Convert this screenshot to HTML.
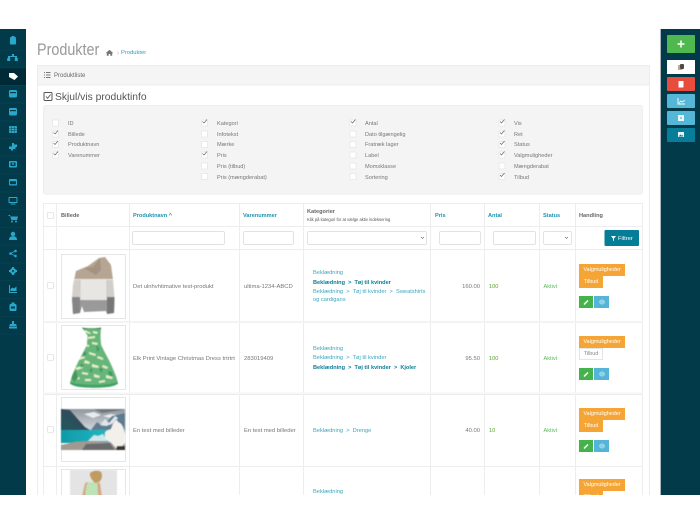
<!DOCTYPE html>
<html lang="da">
<head>
<meta charset="utf-8">
<title>Produkter</title>
<style>
html,body{margin:0;padding:0;width:700px;height:525px;overflow:hidden;background:#fff}
#r{position:absolute;left:0;top:0;width:700px;height:525px;overflow:hidden;font-family:"Liberation Sans",sans-serif;font-size:5.6px;color:#777;filter:blur(.3px)}
.t{position:absolute;height:8px;line-height:8px;white-space:nowrap}
.c{font-size:5.85px}
.l{color:#3ba7c0;font-size:5.7px}
.a{color:#0a7d96;font-weight:bold}
.h{color:#1c93ae;font-weight:bold}
.d{color:#666;font-weight:bold}
.in{position:absolute;background:#fff;border:1px solid #e2e2e2;border-radius:2px;box-sizing:border-box;height:14px}
.badge{position:absolute;box-sizing:border-box;height:12px;line-height:12px;text-align:center;background:#f4a536;color:#fff;font-size:5.4px}
.off{background:#fff;border:1px solid #e5e5e5;color:#888;line-height:10px}
#bottom{position:absolute;left:0;top:495px;width:700px;height:30px;background:#fff}
</style>
</head>
<body>
<div id="r">
<svg width="700" height="525" viewBox="0 0 700 525" style="position:absolute;left:0;top:0">
<defs>
<linearGradient id="sky" x1="0" y1="0" x2="0" y2="1"><stop offset="0" stop-color="#8f979e"/><stop offset="1" stop-color="#dbe2e6"/></linearGradient>
<linearGradient id="wat" x1="0" y1="0" x2="1" y2="0"><stop offset="0" stop-color="#0f9aa6"/><stop offset=".7" stop-color="#1fb6c2"/><stop offset="1" stop-color="#2cb6c0"/></linearGradient>
<filter id="soft" x="-5%" y="-5%" width="110%" height="110%"><feGaussianBlur stdDeviation=".55"/></filter>
<clipPath id="sw"><path d="M76 271L88 266 99 258 105 257 111 265 113 280 114.500 298 114 313 107 314 106 311 84 312 82 306 80 313 73 314 72 298 73 285z"/></clipPath>
<clipPath id="dr"><path d="M82 327.500c3 1.200 16 1.200 19 0l-.5 8c0 4 .5 6 .5 9 3 7 8 15 11 22 2 5 5 11 6 17-6 6-42 6-48 0 1-6 4-12 6-17 3-7 8-15 11-22 0-3 .5-5 .5-9z"/></clipPath>
<clipPath id="lk"><rect x="61" y="409" width="64" height="41"/></clipPath>
</defs>

<!-- sidebars -->
<rect x="0" y="29" width="26" height="466" fill="#023a4a"/>
<rect x="0" y="68" width="26" height="17" fill="#002a37"/>
<g stroke="#0a4656" stroke-width=".6">
<path d="M0 50.500H26M0 68H26M0 85.500H26M0 103H26M0 121H26M0 138.500H26M0 156H26M0 174H26M0 192H26M0 209.500H26M0 227.500H26M0 245H26M0 263H26M0 280.500H26M0 298.500H26M0 316.500H26M0 334H26"/>
</g>
<rect x="660" y="29" width="40" height="466" fill="#023a4a"/>
<rect x="660" y="29" width="1" height="466" fill="#a9b6ba"/>

<!-- left icons -->
<g fill="#2aa8ca">
<rect x="10" y="37" width="6" height="7.500" rx="1"/><rect x="11.500" y="36" width="3" height="2" rx=".5"/>
<path d="M12 54h2v2h3v2h.8v3h-3v-3h.2v-1H10v1h.2v3h-3v-3H8v-2h4z"/>
<path d="M9 73h5l4 3.500-3.500 3.500-5.500-3z" fill="#fff"/>
<rect x="9" y="90" width="8" height="7.500" rx="1.500"/><rect x="10" y="92" width="6" height="1.200" fill="#023a4a"/>
<rect x="9" y="108" width="8" height="7.500" rx="1.500"/><rect x="10" y="110" width="6" height="1.200" fill="#023a4a"/>
<rect x="9" y="126" width="8" height="7" rx="1"/><path d="M9 128.500h8M9 130.500h8M11.500 126v7M14.500 126v7" stroke="#023a4a" stroke-width=".4"/>
<path d="M12 143h2v1.500h3v2.500h-1.500v2H13v1.500h-2V149H9v-2.500h3z"/>
<rect x="9" y="161" width="8" height="6.500" rx="1"/><rect x="10.500" y="162.500" width="5" height="3.500" fill="#023a4a"/><circle cx="13" cy="164" r="1"/>
<rect x="9" y="179" width="8" height="6.500" rx="1"/><rect x="10" y="181.200" width="6" height="3" fill="#023a4a"/>
<rect x="8.500" y="197" width="9" height="6" rx=".8"/><rect x="9.500" y="198" width="7" height="4" fill="#023a4a"/><rect x="10.500" y="203.500" width="5" height="1"/>
<path d="M8.500 215h1.500l.6 1.500H18l-1 3.500h-5.500l-1.500-4H8.500z"/><circle cx="12" cy="221.500" r="1"/><circle cx="16" cy="221.500" r="1"/>
<circle cx="13" cy="234" r="2.200"/><path d="M9 240c0-3 1.800-3.700 4-3.700s4 .7 4 3.700z"/>
<circle cx="10.500" cy="253.500" r="1.300"/><circle cx="15.500" cy="251" r="1.300"/><circle cx="15.500" cy="256" r="1.300"/><path d="M10.500 253.500l5-2.500M10.500 253.500l5 2.500" stroke="#2aa8ca" stroke-width=".8"/>
<circle cx="13" cy="271" r="3"/><circle cx="13" cy="271" r="1" fill="#023a4a"/><path d="M12 267h2v1.500h-2zM12 273.500h2v1.500h-2zM9 270h1.500v2H9zM15.500 270h1.500v2h-1.500z"/>
<path d="M9 285h1v7h7v1H9z"/><path d="M10.500 291v-2l2-1.500 1.500 1 2.500-2v4.500z"/>
<rect x="9.500" y="304" width="7" height="7" rx="1.200"/><rect x="11.500" y="302.500" width="3" height="3" rx=".5"/><rect x="11" y="306.500" width="4" height="2" fill="#023a4a"/>
<path d="M12 321h2v3h2l1 2.500H9l1-2.500h2z"/><rect x="9" y="327" width="8" height="1.500"/>
</g>

<!-- right buttons -->
<rect x="667" y="35" width="28" height="18" rx="1" fill="#4fb84f"/>
<path d="M681 40.500v7M677.500 44h7" stroke="#fff" stroke-width="1.500"/>
<rect x="667" y="60" width="28" height="14" fill="#fff"/>
<rect x="678" y="65" width="4.500" height="5" fill="#c7a588"/><rect x="680" y="64" width="4" height="5" rx="1" fill="#4a4a4a"/>
<rect x="667" y="77" width="28" height="14" rx="1" fill="#e74c3c"/>
<rect x="678.500" y="81" width="5" height="6.500" rx=".5" fill="#fff"/>
<rect x="667" y="94" width="28" height="14" rx="1" fill="#55b7d8"/>
<path d="M678 98v6h7" stroke="#fff" fill="none" stroke-width=".9"/><path d="M679 103l2-2 1.500 1 2.500-2" stroke="#fff" fill="none" stroke-width=".8"/>
<rect x="667" y="111" width="28" height="14" rx="1" fill="#55b7d8"/>
<rect x="678" y="115" width="6" height="6" fill="#e9f6fb"/><rect x="680" y="117" width="2" height="2" fill="#8fd0e6"/>
<rect x="667" y="128" width="28" height="14" rx="1" fill="#067d99"/>
<rect x="678" y="132" width="6" height="5" fill="#e9f6fb"/><path d="M678.500 136.500l2-2 1.500 1.200 1-.8v1.600z" fill="#067d99"/>

<!-- panel -->
<rect x="37.500" y="65.500" width="612" height="440" fill="#fff" stroke="#ececec"/>
<rect x="38" y="66" width="611" height="19" fill="#f5f5f5"/>
<rect x="38" y="84.500" width="611" height="1" fill="#ececec"/>
<path d="M44 72.500h1M44 75h1M44 77.500h1M46 72.500h4.500M46 75h4.500M46 77.500h4.500" stroke="#777" stroke-width="1"/>

<!-- home icon -->
<path d="M109.500 49.800l3.800 3.300h-1.100v2.700h-1.900V54h-1.600v1.800h-1.900v-2.700h-1.100z" fill="#777"/>
<path d="M117.500 51.500l1 1.500-1 1.500" stroke="#aaa" stroke-width=".5" fill="none"/>

<!-- Skjul checkbox -->
<rect x="44" y="92.500" width="8" height="8" rx="1" fill="none" stroke="#555" stroke-width="1"/>
<path d="M46 96.500l1.600 1.800 3-3.800" stroke="#555" stroke-width=".9" fill="none"/>

<!-- well -->
<rect x="43.500" y="105.500" width="599" height="88.500" rx="2" fill="#f4f4f4" stroke="#eeeeee"/>

<!-- well checkboxes -->
<g fill="#fff" stroke="#e4e4e4" stroke-width=".7">
<rect x="52.500" y="120" width="6" height="6"/><rect x="52.500" y="131" width="6" height="6"/><rect x="52.500" y="141.500" width="6" height="6"/><rect x="52.500" y="152" width="6" height="6"/>
<rect x="201.500" y="120" width="6" height="6"/><rect x="201.500" y="131" width="6" height="6"/><rect x="201.500" y="141.500" width="6" height="6"/><rect x="201.500" y="152" width="6" height="6"/><rect x="201.500" y="163" width="6" height="6"/><rect x="201.500" y="173.500" width="6" height="6"/>
<rect x="350" y="120" width="6" height="6"/><rect x="350" y="131" width="6" height="6"/><rect x="350" y="141.500" width="6" height="6"/><rect x="350" y="152" width="6" height="6"/><rect x="350" y="163" width="6" height="6"/><rect x="350" y="173.500" width="6" height="6"/>
<rect x="499" y="120" width="6" height="6"/><rect x="499" y="131" width="6" height="6"/><rect x="499" y="141.500" width="6" height="6"/><rect x="499" y="152" width="6" height="6"/><rect x="499" y="163" width="6" height="6"/><rect x="499" y="173.500" width="6" height="6"/>
</g>
<g fill="none" stroke="#666" stroke-width=".7">
<path d="M53.500 132.500l1.500 1.500 3-3.500M53.500 143l1.500 1.500 3-3.500M53.500 153.500l1.500 1.500 3-3.500"/>
<path d="M202.500 121.500l1.500 1.500 3-3.500M202.500 153.500l1.500 1.500 3-3.500"/>
<path d="M351 121.500l1.500 1.500 3-3.500"/>
<path d="M500 121.500l1.500 1.500 3-3.500M500 132.500l1.500 1.500 3-3.500M500 143l1.500 1.500 3-3.500M500 153.500l1.500 1.500 3-3.500M500 175l1.500 1.500 3-3.500"/>
</g>

<!-- table grid -->
<g stroke="#ededed" stroke-width="1" fill="none">
<path d="M43.500 203.500H642.500M43.500 226.500H642.500M43.500 249.500H642.500M43.500 394.500H642.500M43.500 466.500H642.500"/>
<path d="M43.500 203V495M56.500 203V495M129.500 203V495M239.500 203V495M303.500 203V495M430.500 203V495M484.500 203V495M539.500 203V495M575.500 203V495M642.500 203V495"/>
</g>
<rect x="43" y="321" width="600" height="2" fill="#f3f3f3"/>
<rect x="43" y="392.500" width="600" height="1.500" fill="#f6f6f6"/>

<!-- row checkboxes -->
<g fill="#fff" stroke="#e2e2e2" stroke-width=".8">
<rect x="47.500" y="212.500" width="6" height="6" rx=".8"/>
<rect x="47.500" y="282.500" width="6" height="6" rx=".8"/>
<rect x="47.500" y="354.500" width="6" height="6" rx=".8"/>
<rect x="47.500" y="426.500" width="6" height="6" rx=".8"/>
</g>

<!-- image frames -->
<g fill="#fff" stroke="#e6e6e6" stroke-width="1">
<rect x="61.500" y="254.500" width="64" height="64"/>
<rect x="61.500" y="325.500" width="64" height="64"/>
<rect x="61.500" y="397.500" width="64" height="64"/>
<rect x="61.500" y="469.500" width="64" height="64"/>
</g>

<!-- sweater -->
<g filter="url(#soft)">
<g clip-path="url(#sw)">
<rect x="70" y="255" width="46" height="26" fill="#b5a592"/>
<path d="M84 268l9-1 7-9 1 12-5 5z" fill="#a49380"/>
<rect x="70" y="279" width="46" height="21" fill="#e8e6e3"/>
<path d="M72 280h8l-1 22h-7zM107 280h8v20h-8z" fill="#d2cfca"/>
<path d="M80 280v22M107 280v20" stroke="#bdb9b4" stroke-width=".6"/>
<rect x="70" y="300" width="46" height="15" fill="#9a9a9a"/>
<path d="M72 297h8v17h-8z" fill="#858585"/>
<path d="M107 297h8v17h-8z" fill="#777"/>
</g>
</g>

<!-- dress -->
<g filter="url(#soft)">
<g clip-path="url(#dr)">
<rect x="68" y="326" width="52" height="64" fill="#66b67b"/>
<rect x="82" y="327" width="19" height="2" fill="#2d7a49"/>
<path d="M85 330l6 3-1 1-6-2zM93 331l5 1-1 2-4-1zM88 337l7-1 0 2-7 1zM84 344l5 1 0 2-5-1zM92 342l6 1-1 2-5-1zM78 358l6-2 1 2-6 2zM89 352l7 2-1 2-6-2zM98 356l5 2 0 2-6-2zM85 360l5 2-1 2-5-1zM75 368l7-2 1 2-6 2zM92 364l7 2-1 2-6-1zM103 365l5 2-1 2-5-2zM82 372l6 1 0 2-6-1zM72 378l7-1 1 2-7 1zM94 374l6 2-1 2-5-1zM106 375l7 2-1 2-6-1zM85 379l6 0 0 2-6 0zM99 381l6-1 0 2-6 1z" fill="#e6edc6"/>
<path d="M70 375l6-5 2 8-4 4zM96 345l4 4-3 3zM84 351l3 3-5 3zM108 371l4 1 1 5-4-2zM90 368l3 2-3 3zM80 364l4 1-3 3zM99 368l4 1-2 4z" fill="#429a5c"/>
<path d="M68 381c8 5 44 5 52 0v6H68z" fill="#3fa066"/>
</g>
</g>

<!-- lake -->
<g filter="url(#soft)">
<g clip-path="url(#lk)">
<rect x="61" y="409" width="64" height="24" fill="url(#sky)"/>
<path d="M78 409h16l8 4 14-2 9-2v-1H78z" fill="#6f7980"/>
<path d="M84 414l10-2 7 3-8 3zM103 416l8-2 6 1-7 3z" fill="#e9ecee"/>
<path d="M61 409l9 1 7 8 8 9 7 4H61z" fill="#2f4d5c"/>
<path d="M61 416l10 4 10 10H61z" fill="#27535c"/>
<path d="M90 431l7-9 6 4 9-10 13-3v19z" fill="#5d7b90"/>
<path d="M100 425l5-6 4 4 6-7 3 2-6 6-6 2z" fill="#dde4ea"/>
<rect x="61" y="430" width="64" height="13" fill="url(#wat)"/>
<path d="M88 441l6-6 4 1 5-2 4 7z" fill="#cfe6ea"/>
<path d="M61 445l14-3 16-1 34 2v7H61z" fill="#a09a90"/>
<path d="M86 444l24-1 5 7H82z" fill="#6a6a6e"/>
<path d="M105 433c1-3 4-3 6-4 1-3 2-6 4-8l2-1 1 2c3 1 5 4 6 8l1 4v9l-4 4-5 1c-3-3-4-5-6-6-3-1-6-3-5-7z" fill="#f3f0ec"/>
<path d="M117 446h8v4h-9z" fill="#3a3433"/>
</g>
</g>

<!-- model -->
<g filter="url(#soft)">
<rect x="70" y="470" width="47" height="26" fill="#e4e4e4"/>
<path d="M82 496l3-13 3-1-1 14zM97 482l3 1 2 13h-4z" fill="#d9a987"/>
<path d="M85.500 496c0-6 .5-11 2.500-13.500l4-.5 5 .5 1 13.500z" fill="#bde3b7"/>
<path d="M90 473c3-3 9-3 11-1 2 3 1 8-2 10l-4 1c-2-2-6-6-5-10z" fill="#c19b60"/>
</g>

<!-- action buttons -->
<g>
<rect x="579" y="296" width="14" height="12" fill="#46b24c"/><rect x="594" y="296" width="15" height="12" fill="#55b5d8"/>
<rect x="579" y="368" width="14" height="12" fill="#46b24c"/><rect x="594" y="368" width="15" height="12" fill="#55b5d8"/>
<rect x="579" y="440" width="14" height="12" fill="#46b24c"/><rect x="594" y="440" width="15" height="12" fill="#55b5d8"/>
<g stroke="#fff" stroke-width="1.500"><path d="M584 304.500l4-4M584 376.500l4-4M584 448.500l4-4"/></g>
<g fill="#8fd0e8" stroke="#a9dcee" stroke-width=".5"><ellipse cx="602" cy="302" rx="2.800" ry="2.200"/><ellipse cx="602" cy="374" rx="2.800" ry="2.200"/><ellipse cx="602" cy="446" rx="2.800" ry="2.200"/></g>
</g>

<!-- filter btn -->
<rect x="604.500" y="230" width="34.500" height="16" rx="1" fill="#067d96"/>
<path d="M611 236h5l-2 2.500v2.500l-1-.6v-1.900z" fill="#fff"/>
</svg>

<!-- heading -->
<div class="t" style="left:37px;top:40px;height:20px;line-height:20px;font-size:16.5px;color:#999;transform:scaleX(.87);transform-origin:left center">Produkter</div>
<div class="t" style="left:121px;top:49px;font-size:5.8px;color:#2f9cb8">Produkter</div>
<div class="t" style="left:54px;top:71.500px;font-size:6px;color:#666">Produktliste</div>
<div class="t" style="left:55px;top:90.500px;height:14px;line-height:14px;font-size:10.3px;color:#555">Skjul/vis produktinfo</div>

<!-- well labels -->
<div class="t" style="left:68px;top:120px">ID</div>
<div class="t" style="left:68px;top:131px">Billede</div>
<div class="t" style="left:68px;top:141px">Produktnavn</div>
<div class="t" style="left:68px;top:152px">Varenummer</div>
<div class="t" style="left:217px;top:120px">Kategori</div>
<div class="t" style="left:217px;top:131px">Infotekst</div>
<div class="t" style="left:217px;top:141px">Mærke</div>
<div class="t" style="left:217px;top:152px">Pris</div>
<div class="t" style="left:217px;top:163px">Pris (tilbud)</div>
<div class="t" style="left:217px;top:174px">Pris (mængderabat)</div>
<div class="t" style="left:365px;top:120px">Antal</div>
<div class="t" style="left:365px;top:131px">Dato tilgængelig</div>
<div class="t" style="left:365px;top:141px">Fratræk lager</div>
<div class="t" style="left:365px;top:152px">Label</div>
<div class="t" style="left:365px;top:163px">Momsklasse</div>
<div class="t" style="left:365px;top:174px">Sortering</div>
<div class="t" style="left:514px;top:120px">Vis</div>
<div class="t" style="left:514px;top:131px">Ret</div>
<div class="t" style="left:514px;top:141px">Status</div>
<div class="t" style="left:514px;top:152px">Valgmuligheder</div>
<div class="t" style="left:514px;top:163px">Mængderabat</div>
<div class="t" style="left:514px;top:174px">Tilbud</div>

<!-- table head -->
<div class="t d" style="left:61px;top:212px">Billede</div>
<div class="t h" style="left:133px;top:212px">Produktnavn ^</div>
<div class="t h" style="left:243px;top:212px">Varenummer</div>
<div class="t d" style="left:307px;top:207.500px">Kategorier</div>
<div class="t" style="left:307px;top:215.500px;font-size:4.15px;color:#555">Klik på kategori for at vælge aktiv indeksering</div>
<div class="t h" style="left:435px;top:212px">Pris</div>
<div class="t h" style="left:488px;top:212px">Antal</div>
<div class="t h" style="left:543px;top:212px">Status</div>
<div class="t d" style="left:579px;top:212px">Handling</div>

<!-- filters -->
<div class="in" style="left:132px;top:231px;width:93px"></div>
<div class="in" style="left:243px;top:231px;width:51px"></div>
<div class="in" style="left:307px;top:231px;width:120px"></div>
<div class="in" style="left:439px;top:231px;width:42px"></div>
<div class="in" style="left:493px;top:231px;width:43px"></div>
<div class="in" style="left:543px;top:231px;width:29px"></div>
<svg width="700" height="525" style="position:absolute;left:0;top:0"><path d="M421 237l1.500 1.500 1.500-1.500M565 237l1.500 1.500 1.500-1.500" stroke="#777" stroke-width=".7" fill="none"/></svg>
<div class="t" style="left:618px;top:234.500px;font-size:5.8px;color:#fff">Filtrer</div>

<!-- row 1 -->
<div class="t c" style="left:133px;top:282.500px">Det ulnhvhtimative test-produkt</div>
<div class="t c" style="left:244px;top:282.500px">ultima-1234-ABCD</div>
<div class="t l" style="left:313px;top:268.500px">Beklædning</div>
<div class="t a" style="left:313px;top:278.500px">Beklædning &nbsp;&gt;&nbsp; Tøj til kvinder</div>
<div class="t l" style="left:313px;top:287.500px">Beklædning &nbsp;&gt;&nbsp; Tøj til kvinder &nbsp;&gt;&nbsp; Sweatshirts</div>
<div class="t l" style="left:313px;top:295.500px">og cardigans</div>
<div class="t c" style="right:220px;top:282.500px">160.00</div>
<div class="t" style="left:489px;top:282.500px;color:#5a9e2f">100</div>
<div class="t" style="left:543.500px;top:282.500px;color:#5cb85c">Aktivt</div>
<div class="badge" style="left:579px;top:264px;width:46px">Valgmuligheder</div>
<div class="badge" style="left:579px;top:276px;width:24px">Tilbud</div>

<!-- row 2 -->
<div class="t c" style="left:133px;top:354.500px">Elk Print Vintage Christmas Dress trtrtrt</div>
<div class="t c" style="left:244px;top:354.500px">283019409</div>
<div class="t l" style="left:313px;top:344.500px">Beklædning</div>
<div class="t l" style="left:313px;top:353.500px">Beklædning &nbsp;&gt;&nbsp; Tøj til kvinder</div>
<div class="t a" style="left:313px;top:363.500px">Beklædning &nbsp;&gt;&nbsp; Tøj til kvinder &nbsp;&gt;&nbsp; Kjoler</div>
<div class="t c" style="right:220px;top:354.500px">95.50</div>
<div class="t" style="left:489px;top:354.500px;color:#5a9e2f">100</div>
<div class="t" style="left:543.500px;top:354.500px;color:#5cb85c">Aktivt</div>
<div class="badge" style="left:579px;top:336px;width:46px">Valgmuligheder</div>
<div class="badge off" style="left:579px;top:348px;width:24px">Tilbud</div>

<!-- row 3 -->
<div class="t c" style="left:133px;top:426.500px">En test med billeder</div>
<div class="t c" style="left:244px;top:426.500px">En test med billeder</div>
<div class="t l" style="left:313px;top:426.500px">Beklædning &nbsp;&gt;&nbsp; Drenge</div>
<div class="t c" style="right:220px;top:426.500px">40.00</div>
<div class="t" style="left:489px;top:426.500px;color:#5a9e2f">10</div>
<div class="t" style="left:543.500px;top:426.500px;color:#5cb85c">Aktivt</div>
<div class="badge" style="left:579px;top:408px;width:46px">Valgmuligheder</div>
<div class="badge" style="left:579px;top:420px;width:24px">Tilbud</div>

<!-- row 4 -->
<div class="t l" style="left:313px;top:488px">Beklædning</div>
<div class="badge" style="left:579px;top:479px;width:46px">Valgmuligheder</div>
<div class="badge" style="left:579px;top:491px;width:24px">Tilbud</div>

<div id="bottom"></div>
</div>
</body>
</html>
